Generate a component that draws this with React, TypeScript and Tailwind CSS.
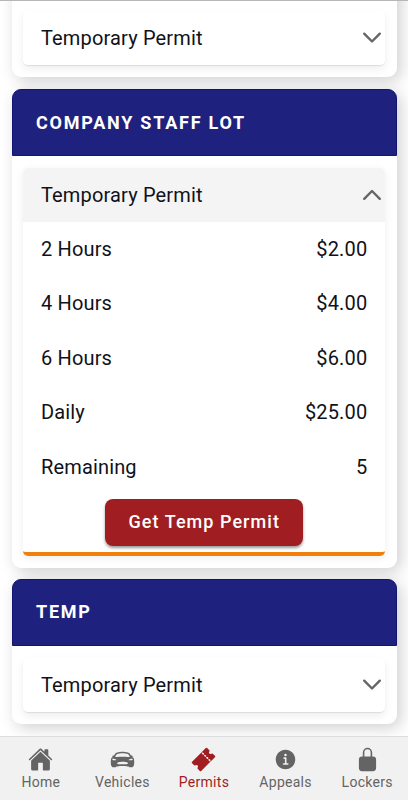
import type { ReactNode } from "react";
import { IoHome, IoCarSport, IoTicket, IoInformationCircle, IoLockClosed } from "react-icons/io5";

function Chevron({ up = false }: { up?: boolean }) {
  return (
    <svg viewBox="0 0 20 12" className="h-3 w-5 text-[#666666]" fill="none" stroke="currentColor" strokeWidth="2.4" strokeLinecap="round" strokeLinejoin="round">
      <path d={up ? "M2.2 9.8 10 2l7.8 7.8" : "M2.2 1.7 10 9.5l7.8-7.8"} />
    </svg>
  );
}

function Header({ open = false }: { open?: boolean }) {
  return (
    <div className={`flex h-[54.4px] items-center justify-between pr-[3px] pl-[18px] ${open ? "bg-[#f4f4f4]" : "bg-white"}`}>
      <span>Temporary Permit</span>
      <Chevron up={open} />
    </div>
  );
}

function Card({ title, children }: { title?: string; children: ReactNode }) {
  return (
    <section className="w-[385px] rounded-[9px] bg-white shadow-[4px_4px_16px_rgba(0,0,0,0.19)]">
      {title ? (
        <h2 className="flex h-[67px] items-center rounded-t-[9px] border border-[#121570] bg-[#1e227e] pl-[23.5px] text-[18px] font-bold tracking-[1.76px] text-white">
          {title}
        </h2>
      ) : (
        <div className="h-5" />
      )}
      <div className="p-3 pt-[11.5px] pl-[11.5px]">{children}</div>
    </section>
  );
}

function Panel({ children, open = false }: { children: ReactNode; open?: boolean }) {
  return (
    <div className={`overflow-hidden rounded-[5px] ${open ? "border-b-[4.5px] border-[#f27f0c] shadow-[0_2px_9px_rgba(0,0,0,0.07)]" : "shadow-[0_4px_9px_rgba(0,0,0,0.07),0_1px_1px_rgba(0,0,0,0.09)]"}`}>
      {children}
    </div>
  );
}

const rates = [
  ["2 Hours", "$2.00"],
  ["4 Hours", "$4.00"],
  ["6 Hours", "$6.00"],
  ["Daily", "$25.00"],
  ["Remaining", "5"],
];

const tabs = [
  { label: "Home", Icon: IoHome },
  { label: "Vehicles", Icon: IoCarSport },
  { label: "Permits", Icon: IoTicket, active: true },
  { label: "Appeals", Icon: IoInformationCircle },
  { label: "Lockers", Icon: IoLockClosed },
];

export default function App() {
  return (
    <div className="flex h-[800px] w-[408px] flex-col overflow-hidden border-t border-[#b6b6b6] bg-white font-[Roboto,sans-serif] text-[20px] leading-none tracking-[0.15px] text-[#111118]">
      <main className="flex min-h-0 flex-1 flex-col gap-[11px] overflow-hidden pl-[11.5px]">
        <div className="-mt-[21.9px] shrink-0">
          <Card>
            <Panel><Header /></Panel>
          </Card>
        </div>
        <div className="mt-[1px] shrink-0">
          <Card title="COMPANY STAFF LOT">
            <Panel open>
              <Header open />
              {rates.map(([label, value]) => (
                <div key={label} className="flex h-[54.4px] items-center justify-between pr-[17.2px] pl-[18px]">
                  <span>{label}</span>
                  <span>{value}</span>
                </div>
              ))}
              <div className="flex h-[58.1px] items-start justify-center pt-[5px]">
                <button className="h-[47px] w-[198px] rounded-[8px] bg-[#a01e21] pl-px text-[18px] font-medium tracking-[1.05px] text-white shadow-[0_2px_3px_rgba(0,0,0,0.4)]">
                  Get Temp Permit
                </button>
              </div>
            </Panel>
          </Card>
        </div>
        <div className="shrink-0">
          <Card title="TEMP">
            <Panel><Header /></Panel>
          </Card>
        </div>
      </main>
      <nav className="flex h-[64px] shrink-0 border-t border-[#dddddd] bg-[#f1f1f1] text-[14px] tracking-[0.28px]">
        {tabs.map(({ label, Icon, active }) => (
          <div key={label} className={`flex flex-1 flex-col items-center pt-[10px] ${active ? "text-[#a01e21]" : "text-[#646464]"}`}>
            <Icon className="size-[25px]" />
            <span className="mt-[3px]">{label}</span>
          </div>
        ))}
      </nav>
    </div>
  );
}
